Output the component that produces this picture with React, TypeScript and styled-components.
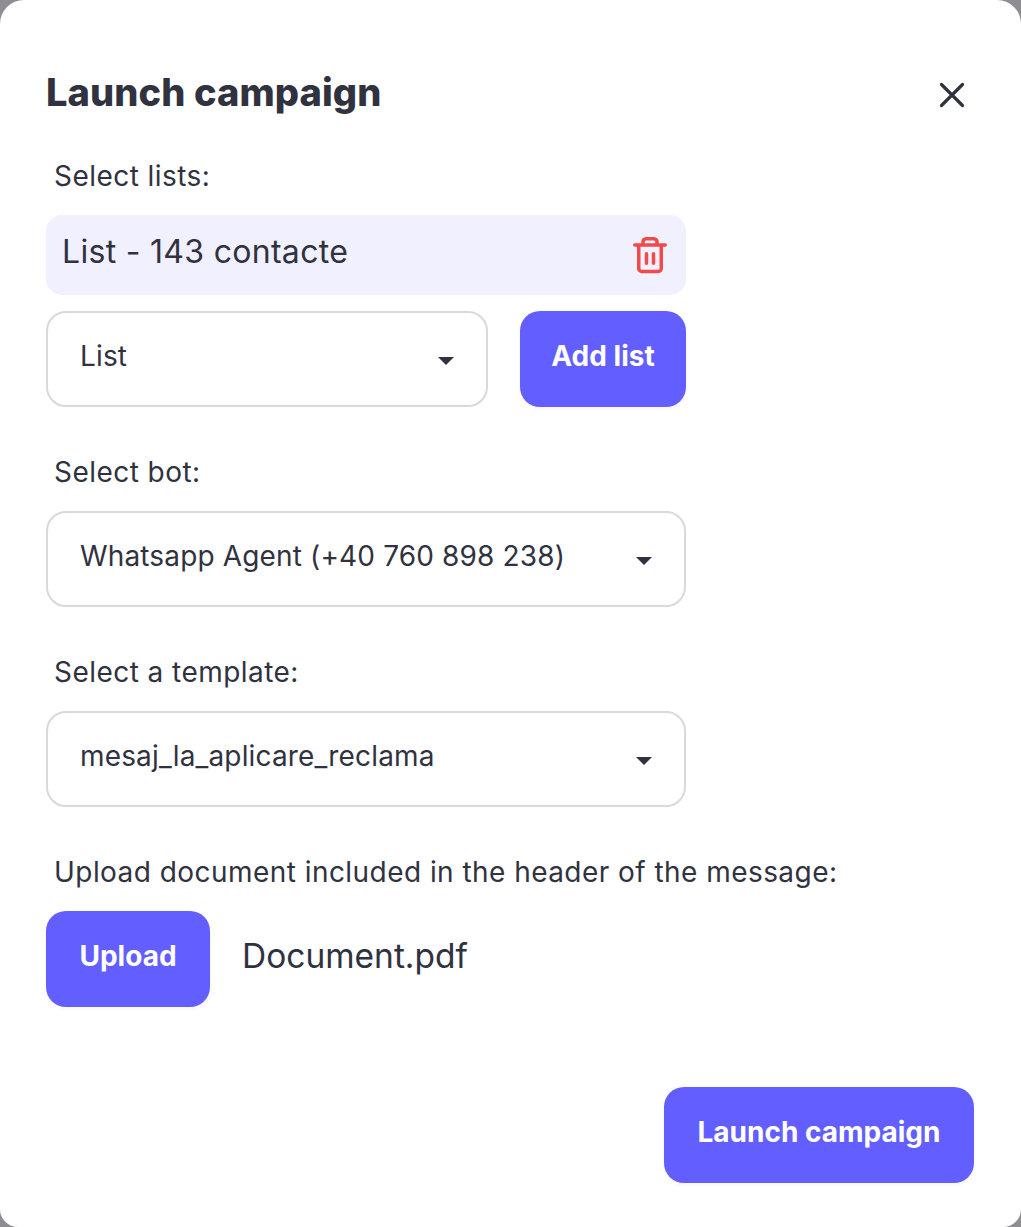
import React from "react";
import styled, { createGlobalStyle } from "styled-components";

const GlobalStyle = createGlobalStyle`
  html, body {
    margin: 0;
    padding: 0;
    background: #8e8e92;
  }
  * {
    box-sizing: border-box;
  }
`;

const Modal = styled.div`
  width: 1021px;
  height: 1227px;
  background: #ffffff;
  border-radius: 24px 24px 18px 18px;
  padding: 68px 47px 44px 46px;
  display: flex;
  flex-direction: column;
  font-family: Inter, "Liberation Sans", sans-serif;
  color: #30323f;
`;

const Header = styled.header`
  display: flex;
  justify-content: space-between;
  align-items: center;
  height: 48px;
`;

const Title = styled.h1`
  margin: 0;
  font-size: 38px;
  line-height: 48px;
  font-weight: 800;
  letter-spacing: 0.1px;
`;

const CloseButton = styled.button`
  display: flex;
  padding: 0;
  border: 0;
  background: none;
  color: #30323f;
  margin: 6px 8px 0 0;
`;

const Label = styled.div<{ $top: number }>`
  margin: ${(p) => p.$top}px 0 0 8px;
  font-size: 28px;
  line-height: 40px;
  height: 40px;
  white-space: nowrap;
  letter-spacing: 0.45px;
`;

const Form = styled.div`
  width: 640px;
  display: flex;
  flex-direction: column;
`;

const ListChip = styled.div`
  margin-top: 19px;
  height: 80px;
  padding: 0 18px 8px 16px;
  background: #f0f0fe;
  border-radius: 16px;
  display: flex;
  align-items: center;
  justify-content: space-between;
  font-size: 32px;
  letter-spacing: 0.3px;
`;

const TrashButton = styled.span`
  display: flex;
  color: #f04a4a;
  margin-top: 8px;
`;

const Row = styled.div`
  display: flex;
  gap: 32px;
  margin-top: 16px;
`;

const Select = styled.div<{ $top?: number; $grow?: boolean }>`
  flex: ${(p) => (p.$grow ? "1" : "none")};
  height: 96px;
  margin-top: ${(p) => p.$top ?? 0}px;
  padding: 0 32px 6px;
  border: 2px solid #d9d9d9;
  border-radius: 20px;
  display: flex;
  align-items: center;
  justify-content: space-between;
  font-size: 28px;
  letter-spacing: 0.15px;
`;

const Caret = styled.span`
  width: 0;
  height: 0;
  margin-top: 10px;
  border-left: 8px solid transparent;
  border-right: 8px solid transparent;
  border-top: 8px solid #30323f;
`;

const PrimaryButton = styled.button<{ $width: number }>`
  width: ${(p) => p.$width}px;
  height: 96px;
  flex-shrink: 0;
  padding: 0 0 6px;
  border: 0;
  border-radius: 20px;
  background: #635eff;
  box-shadow: 0 2px 4px rgba(99, 94, 255, 0.06);
  color: #ffffff;
  font-family: inherit;
  font-size: 28px;
  font-weight: 700;
`;

const UploadRow = styled.div`
  display: flex;
  align-items: center;
  gap: 32px;
  margin-top: 19px;
`;

const FileName = styled.span`
  padding-bottom: 6px;
  font-size: 33.5px;
`;

const Footer = styled.footer`
  margin-top: 80px;
  display: flex;
  justify-content: flex-end;
`;

const App: React.FC = () => {
  return (
    <>
      <GlobalStyle />
      <Modal>
        <Header>
          <Title>Launch campaign</Title>
          <CloseButton aria-label="Close">
            <svg width="28" height="28" viewBox="0 0 28 28" fill="none" stroke="currentColor" strokeWidth="3.2" strokeLinecap="round">
              <path d="M3.5 3.5 24.5 24.5M24.5 3.5 3.5 24.5" />
            </svg>
          </CloseButton>
        </Header>
        <Form>
          <Label $top={40}>Select lists:</Label>
          <ListChip>
            List - 143 contacte
            <TrashButton>
              <svg width="36" height="40" viewBox="0 0 36 40" fill="none" stroke="currentColor" strokeWidth="3.5" strokeLinecap="round" strokeLinejoin="round">
                <path d="M2.750 10h30.500M11 10V7a3 3 0 0 1 3-3.250h8A3 3 0 0 1 25 7v3M6.750 10v23.500a3 3 0 0 0 3 3h16.500a3 3 0 0 0 3-3V10M14.500 18.750v9.500M21.500 18.750v9.500" />
              </svg>
            </TrashButton>
          </ListChip>
          <Row>
            <Select $grow>
              List
              <Caret />
            </Select>
            <PrimaryButton $width={166}>Add list</PrimaryButton>
          </Row>
          <Label $top={45}>Select bot:</Label>
          <Select $top={19}>
            Whatsapp Agent (+40 760 898 238)
            <Caret />
          </Select>
          <Label $top={45}>Select a template:</Label>
          <Select $top={19}>
            mesaj_la_aplicare_reclama
            <Caret />
          </Select>
          <Label $top={45}>Upload document included in the header of the message:</Label>
        </Form>
        <UploadRow>
          <PrimaryButton $width={164}>Upload</PrimaryButton>
          <FileName>Document.pdf</FileName>
        </UploadRow>
        <Footer>
          <PrimaryButton $width={310}>Launch campaign</PrimaryButton>
        </Footer>
      </Modal>
    </>
  );
};

export default App;
